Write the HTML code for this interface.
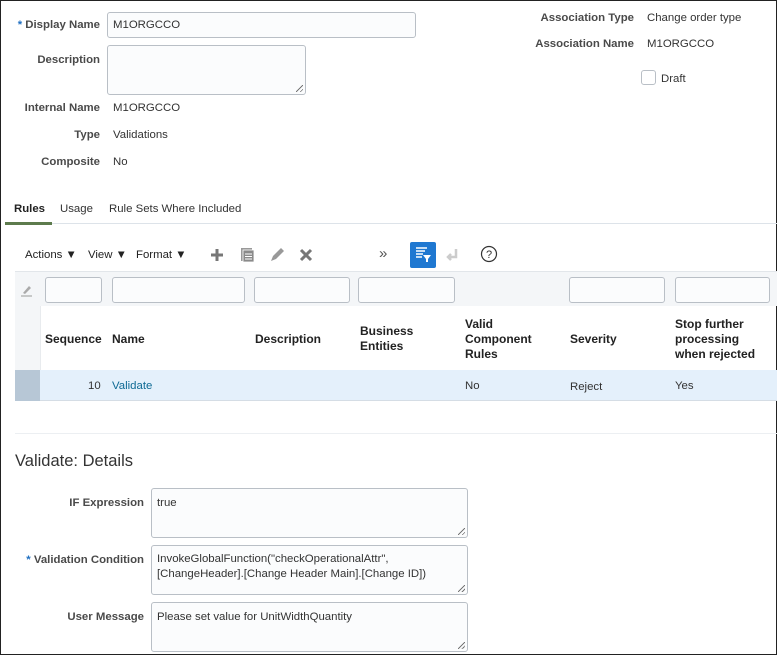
<!DOCTYPE html>
<html><head><style>
*{box-sizing:border-box;margin:0;padding:0}
body{width:778px;height:656px;position:relative;background:#fff;font-family:"Liberation Sans",sans-serif;font-size:11.4px;line-height:16px;color:#333;overflow:hidden}
.frame{position:absolute;left:0;top:0;width:777px;height:655px;border:1px solid #222}
.a{position:absolute;white-space:nowrap}
.lbl{position:absolute;font-weight:bold;color:#4a4a4a;text-align:right;white-space:nowrap}
.box{position:absolute;border:1px solid #b9bfc6;border-radius:3px;background:#fbfcfd}
.req{color:#1f6fc1}
.th{position:absolute;font-weight:bold;color:#222;font-size:12px;line-height:15px}
.rz{position:absolute;right:2px;bottom:2px;width:7px;height:7px;background:linear-gradient(135deg,transparent 45%,#777 45%,#777 55%,transparent 55%,transparent 75%,#777 75%,#777 85%,transparent 85%)}
</style></head><body>
<div class="frame"></div>

<div class="lbl" style="left:0;width:100px;top:17px"><span class="req">*</span> Display Name</div>
<div class="box" style="left:107px;top:12px;width:309px;height:26px"></div>
<div class="a" style="left:113px;top:17px">M1ORGCCO</div>
<div class="lbl" style="left:0;width:100px;top:52px">Description</div>
<div class="box" style="left:107px;top:45px;width:199px;height:50px"><div class="rz"></div></div>
<div class="lbl" style="left:0;width:100px;top:100px">Internal Name</div>
<div class="a" style="left:113px;top:100px">M1ORGCCO</div>
<div class="lbl" style="left:0;width:100px;top:127px">Type</div>
<div class="a" style="left:113px;top:127px">Validations</div>
<div class="lbl" style="left:0;width:100px;top:154px">Composite</div>
<div class="a" style="left:113px;top:154px">No</div>

<div class="lbl" style="left:500px;width:134px;top:10px">Association Type</div>
<div class="a" style="left:647px;top:10px">Change order type</div>
<div class="lbl" style="left:500px;width:134px;top:36px">Association Name</div>
<div class="a" style="left:647px;top:36px">M1ORGCCO</div>
<div class="box" style="left:641px;top:70px;width:15px;height:15px;background:#fff"></div>
<div class="a" style="left:661px;top:71px">Draft</div>

<div class="a" style="left:14px;top:201px;font-weight:bold;color:#222">Rules</div>
<div class="a" style="left:60px;top:201px">Usage</div>
<div class="a" style="left:109px;top:201px">Rule Sets Where Included</div>
<div class="a" style="left:5px;top:223px;width:772px;height:1px;background:#dde3e9"></div>
<div class="a" style="left:5px;top:222px;width:47px;height:3px;background:#5d7b4d"></div>

<div class="a" style="left:25px;top:247px;color:#222">Actions ▼</div>
<div class="a" style="left:88px;top:247px;color:#222">View ▼</div>
<div class="a" style="left:136px;top:247px;color:#222">Format ▼</div>
<svg class="a" style="left:210px;top:248px" width="14" height="14"><path d="M7 1v12M1 7h12" stroke="#777" stroke-width="3"/></svg>
<svg class="a" style="left:240px;top:247px" width="15" height="16"><rect x="1" y="1" width="11" height="13" fill="#999"/><rect x="3" y="3" width="11" height="12" fill="#8a8a8a" stroke="#fff" stroke-width=".8"/><path d="M5 7h7M5 9.5h7M5 12h7" stroke="#fff"/></svg>
<svg class="a" style="left:269px;top:247px" width="16" height="16"><path d="M2 14l2-5 8-8 3 3-8 8z" fill="#999"/></svg>
<svg class="a" style="left:299px;top:248px" width="14" height="14"><path d="M2 2l10 10M12 2L2 12" stroke="#777" stroke-width="3"/></svg>
<div class="a" style="left:379px;top:246px;font-size:15px;color:#555">»</div>
<div class="a" style="left:410px;top:242px;width:26px;height:26px;background:#1f78d1;border-radius:2px"></div>
<svg class="a" style="left:415px;top:247px" width="17" height="16"><path d="M1 1h11M1 4h9M1 7h7M1 10h6" stroke="#fff" stroke-width="1.5"/><path d="M8 8h8l-3 4v3h-2v-3z" fill="#fff"/></svg>
<svg class="a" style="left:445px;top:248px" width="14" height="14"><path d="M11 1v8H3M6 6L3 9l3 3" stroke="#ccc" stroke-width="2.5" fill="none"/></svg>
<svg class="a" style="left:480px;top:245px" width="18" height="18"><circle cx="9" cy="9" r="7.5" fill="none" stroke="#333" stroke-width="1.2"/><text x="9" y="13" font-size="11" text-anchor="middle" font-family="Liberation Sans" fill="#333">?</text></svg>

<div class="a" style="left:15px;top:271px;width:762px;height:35px;background:#f4f6f8;border-top:1px solid #e2e6ea"></div>
<svg class="a" style="left:20px;top:283px" width="14" height="14"><path d="M3 10l6-7 2 2-6 6z" fill="#aaa"/><path d="M1 13h11" stroke="#999"/></svg>
<div class="box" style="left:45px;top:277px;width:57px;height:26px"></div>
<div class="box" style="left:112px;top:277px;width:133px;height:26px"></div>
<div class="box" style="left:254px;top:277px;width:96px;height:26px"></div>
<div class="box" style="left:358px;top:277px;width:97px;height:26px"></div>
<div class="box" style="left:569px;top:277px;width:96px;height:26px"></div>
<div class="box" style="left:675px;top:277px;width:95px;height:26px"></div>
<div class="a" style="left:40px;top:306px;width:1px;height:64px;background:#e8ebee"></div>
<div class="a" style="left:15px;top:306px;width:25px;height:64px;background:#f4f6f8"></div>

<div class="th" style="left:45px;top:332px">Sequence</div>
<div class="th" style="left:112px;top:332px">Name</div>
<div class="th" style="left:255px;top:332px">Description</div>
<div class="th" style="left:360px;top:324px">Business<br>Entities</div>
<div class="th" style="left:465px;top:317px">Valid<br>Component<br>Rules</div>
<div class="th" style="left:570px;top:332px">Severity</div>
<div class="th" style="left:675px;top:317px">Stop further<br>processing<br>when rejected</div>

<div class="a" style="left:15px;top:370px;width:762px;height:31px;background:#e4f0fb;border-bottom:1px solid #d5dde5"></div>
<div class="a" style="left:15px;top:370px;width:25px;height:31px;background:#b7c7d6"></div>
<div class="a" style="left:88px;top:378px">10</div>
<div class="a" style="left:112px;top:378px;color:#0e6a94">Validate</div>
<div class="a" style="left:465px;top:378px">No</div>
<div class="a" style="left:570px;top:379px">Reject</div>
<div class="a" style="left:675px;top:378px">Yes</div>
<div class="a" style="left:15px;top:433px;width:762px;height:1px;background:#eceff2"></div>

<div class="a" style="left:15px;top:451px;font-size:16.5px;line-height:20px;color:#333">Validate: Details</div>

<div class="lbl" style="left:0;width:144px;top:495px">IF Expression</div>
<div class="box" style="left:151px;top:488px;width:317px;height:50px"><div class="rz"></div></div>
<div class="a" style="left:157px;top:495px">true</div>
<div class="lbl" style="left:0;width:144px;top:552px"><span class="req">*</span> Validation Condition</div>
<div class="box" style="left:151px;top:545px;width:317px;height:50px"><div class="rz"></div></div>
<div class="a" style="left:157px;top:552px;line-height:15px">InvokeGlobalFunction("checkOperationalAttr",<br>[ChangeHeader].[Change Header Main].[Change ID])</div>
<div class="lbl" style="left:0;width:144px;top:609px">User Message</div>
<div class="box" style="left:151px;top:602px;width:317px;height:50px"><div class="rz"></div></div>
<div class="a" style="left:157px;top:609px">Please set value for UnitWidthQuantity</div>
</body></html>
